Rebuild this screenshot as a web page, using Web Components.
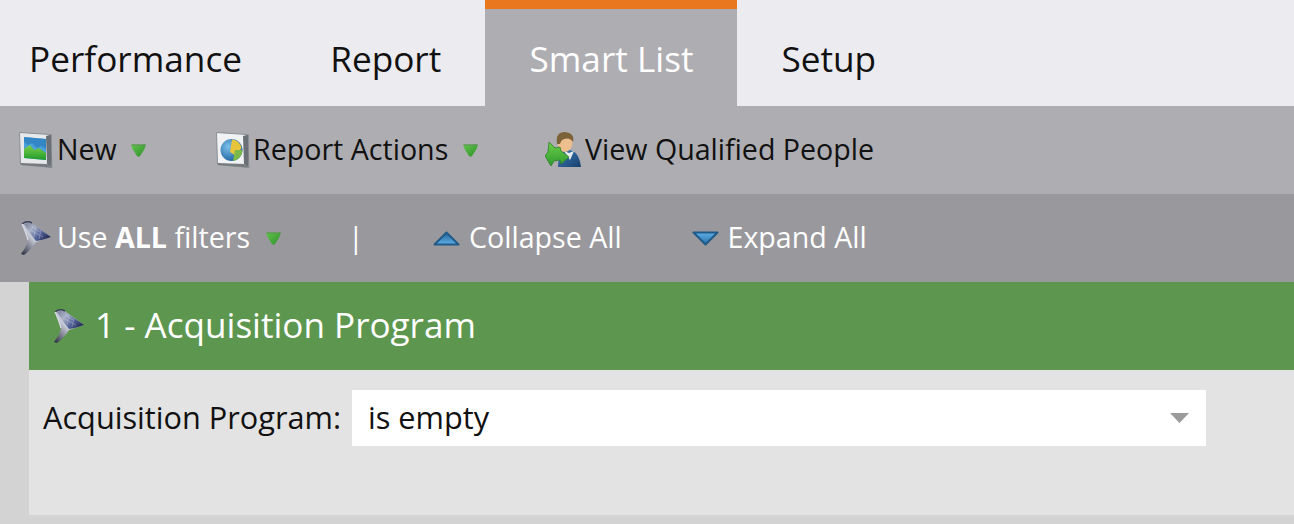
<!DOCTYPE html>
<html><head><meta charset="utf-8">
<style>
html,body{margin:0;padding:0;background:#d3d3d3;overflow:hidden}
body{width:1294px;height:524px;font-family:"Open Sans",sans-serif}
</style></head>
<body>
<svg width="0" height="0" style="position:absolute">
<defs>
<linearGradient id="fn" x1="0" y1="0" x2="1" y2=".6"><stop offset="0" stop-color="#767e96"/><stop offset=".35" stop-color="#aab1c6"/><stop offset=".7" stop-color="#56669c"/><stop offset="1" stop-color="#27305a"/></linearGradient>
<linearGradient id="fs" x1="0" y1="1" x2="1" y2="0"><stop offset="0" stop-color="#23283a"/><stop offset=".45" stop-color="#c8ccd8"/><stop offset="1" stop-color="#5f6b8c"/></linearGradient>
<linearGradient id="gr" x1="0" y1="0" x2="1" y2="1"><stop offset="0" stop-color="#62c44c"/><stop offset="1" stop-color="#2f8f2c"/></linearGradient>
<linearGradient id="bl" x1="0" y1="0" x2="0" y2="1"><stop offset="0" stop-color="#245f96"/><stop offset="1" stop-color="#5eb0e8"/></linearGradient>
<linearGradient id="blu" x1="0" y1="0" x2="0" y2="1"><stop offset="0" stop-color="#5eb0e8"/><stop offset="1" stop-color="#2a6ca6"/></linearGradient>
<linearGradient id="pg" x1="0" y1="0" x2="0" y2="1"><stop offset="0" stop-color="#7ed04a"/><stop offset="1" stop-color="#1f9a2e"/></linearGradient>
<radialGradient id="gl" cx=".35" cy=".35" r=".75"><stop offset="0" stop-color="#7cc0ea"/><stop offset="1" stop-color="#1a5c98"/></radialGradient>
<linearGradient id="ar" x1="0" y1="0" x2="0" y2="1"><stop offset="0" stop-color="#6fcf46"/><stop offset="1" stop-color="#2c9a32"/></linearGradient>
<linearGradient id="su" x1="0" y1="0" x2="1" y2="1"><stop offset="0" stop-color="#3f7cb8"/><stop offset="1" stop-color="#163f6c"/></linearGradient>
<symbol id="funnel" viewBox="0 0 34 36">
<path d="M3 4Q8 0 13 3L32 17Q24 20 17 22Q12 30 5 35L2 34Q8 26 9 20Q6 10 3 4Z" fill="url(#fs)"/>
<path d="M5 4Q9 2 13 4L32 17Q24 20 17 21Q11 14 5 4Z" fill="url(#fn)"/>
<path d="M3 4Q8 0 13 3" fill="none" stroke="#3b4154" stroke-width="1.6"/>
<path d="M3 4Q6 10 9 20" fill="none" stroke="#d9dde6" stroke-width="1.2"/>
<path d="M13 7 21 12M11 10 24 17M17 6 15 17M22 10 20 19" stroke="#e3e7f2" stroke-width=".7" opacity=".4" fill="none"/>
</symbol>
<symbol id="tri" viewBox="0 0 15 13">
<path d="M0 .5H15L13.5 5 9 12Q7.5 13.5 6 12L1.5 5Z" fill="url(#gr)"/>
<path d="M.5 1H14.5" stroke="#5d8f54" stroke-width="1"/>
</symbol>
</defs>
</svg>

<template id="t-tabs"><style>
:host{display:flex;height:106px;background:#ecebf0;padding-left:29px;box-sizing:border-box}
</style><slot></slot></template>

<template id="t-tab"><style>
:host{display:flex;height:106px;box-sizing:border-box;padding:11px 44.1px 0;align-items:center;font-size:35.2px;color:#111;line-height:1}
:host([first]){padding-left:0}
:host([active]){background:#aeadb2;color:#fff;border-top:9px solid #e8771d;padding-top:2px;padding-right:43.4px;margin-right:.4px}
</style><slot></slot></template>

<template id="t-bar"><style>
:host{display:flex;align-items:center;height:88px;box-sizing:border-box;padding-left:19px;background:#aeadb2;color:#111;font-size:28.6px}
:host([dark]){background:#99989d;color:#fff}
</style><slot></slot></template>

<template id="t-act"><style>
:host{display:flex;align-items:center;white-space:nowrap;line-height:1}
::slotted(svg){flex:none;filter:blur(.35px)}
::slotted(span){padding-bottom:2px}
</style><slot></slot></template>

<template id="t-card"><style>
:host{display:block;margin-left:29px;background:#e3e3e3;height:233px}
.h{display:flex;align-items:center;height:88px;background:#5d964f;color:#fff;font-size:35.1px;padding-left:23px;box-sizing:border-box;gap:9px}
.h ::slotted(span){padding-bottom:3px;line-height:1}
.h ::slotted(svg){filter:blur(.35px)}
.b{display:flex;align-items:center;padding:20px 0 0 14px;height:56px;box-sizing:content-box;font-size:30.7px;color:#111}
</style><div class="h"><slot name="icon"></slot><slot name="title"></slot></div><div class="b"><slot></slot></div></template>

<template id="t-sel"><style>
:host{display:flex;align-items:center;justify-content:space-between;height:56px;width:854px;box-sizing:border-box;background:#fff;padding:0 17px 0 16px;color:#111;font-size:30.7px;line-height:1}
svg{flex:none;filter:blur(.4px)}
span{padding-bottom:2px}
</style><span><slot></slot></span><svg width="19" height="10" viewBox="0 0 19 10"><path d="M0 0H19L9.5 10Z" fill="#9b9b9b"/></svg></template>

<x-tabs>
<x-tab first>Performance</x-tab><x-tab>Report</x-tab><x-tab active>Smart List</x-tab><x-tab>Setup</x-tab>
</x-tabs>

<x-bar>
<x-act style="width:197px">
<svg width="34" height="36" viewBox="0 0 34 36" style="margin-right:4px"><path d="M.5.5 31 2.5 33 35.5 1.5 32.5Z" fill="#e6e8ea" stroke="#8a8e93" stroke-width="1"/><path d="M27 4 32.5 2.5V35.5L28 32Z" fill="#6b7076"/><path d="M2 31 28 32 33 35.5 2 33Z" fill="#777b80"/><path d="M5 5 27 7V28L5 26Z" fill="#4aa0d8"/><path d="M5 5 27 7V17L22 14 18 16 13 11 9 13 5 10Z" fill="#2f7fc0" opacity=".8"/><path d="M5 17 11 13 15 18 20 16 27 21V28L5 26Z" fill="url(#pg)"/></svg>
<span>New</span>
<svg width="15" height="13" style="margin-left:14px"><use href="#tri"/></svg>
</x-act>
<x-act style="width:329px">
<svg width="34" height="36" viewBox="0 0 34 36" style="margin-right:3px"><path d="M.5.5 31 2.5 33 35.5 1.5 32.5Z" fill="#f1f2f4" stroke="#8a8e93" stroke-width="1"/><path d="M27 4 32.5 2.5V35.5L28 32Z" fill="#6b7076"/><path d="M2 31 28 32 33 35.5 2 33Z" fill="#777b80"/><circle cx="15.5" cy="18" r="11" fill="url(#gl)"/><path d="M16 7.5A11 11 0 0 1 25.5 16L20 24 14 20Z" fill="#e6c53c"/><path d="M19 18H26.5A11 11 0 0 1 17 29Z" fill="#7cb94a"/></svg>
<span>Report Actions</span>
<svg width="15" height="13" style="margin-left:15px"><use href="#tri"/></svg>
</x-act>
<x-act>
<svg width="36" height="36" viewBox="0 0 36 36" style="margin-right:4px"><path d="M13 35Q13 19 24 18 34 19 36 35Z" fill="url(#su)"/><path d="M19 19 25 28 29 19 24 21Z" fill="#e8ecef"/><ellipse cx="20" cy="11" rx="7.5" ry="9" fill="#eebf8e"/><path d="M12 12Q10 0 20 0 30 1 28 10 25 5 19 7 16 8 15 12Z" fill="#7c6237"/><path d="M4 10 10 16 15 15 16 19 24 25 16 32 15 28 9 29 6 34 0 24 3 20Z" fill="url(#ar)" stroke="#2e7f2a" stroke-width=".8"/></svg>
<span>View Qualified People</span>
</x-act>
</x-bar>

<x-bar dark>
<x-act style="width:329px">
<svg width="34" height="36" style="margin-right:4px"><use href="#funnel"/></svg>
<span>Use <b>ALL</b> filters</span>
<svg width="15" height="13" style="margin-left:16px"><use href="#tri"/></svg>
</x-act>
<x-act style="width:85px"><span>|</span></x-act>
<x-act style="width:259px">
<svg width="27" height="15" viewBox="0 0 27 15" style="margin-right:9px"><path d="M13.5 1.5 25.5 13.5H1.5Z" fill="url(#bl)" stroke="#1f5a88" stroke-width="2" stroke-linejoin="round"/></svg>
<span>Collapse All</span>
</x-act>
<x-act>
<svg width="27" height="15" viewBox="0 0 27 15" style="margin-right:8.5px"><path d="M1.5 1.5H25.5L13.5 13.5Z" fill="url(#blu)" stroke="#1f5a88" stroke-width="2" stroke-linejoin="round"/></svg>
<span>Expand All</span>
</x-act>
</x-bar>

<x-card>
<svg slot="icon" width="34" height="36"><use href="#funnel"/></svg>
<span slot="title">1 - Acquisition Program</span>
<span style="margin-right:11px;white-space:nowrap;line-height:1;padding-bottom:2px">Acquisition Program:</span>
<x-sel>is empty</x-sel>
</x-card>

<script>
function def(name,tid){
  customElements.define(name,class extends HTMLElement{
    constructor(){super();this.attachShadow({mode:'open'}).appendChild(document.getElementById(tid).content.cloneNode(true));}
  });
}
def('x-tabs','t-tabs');def('x-tab','t-tab');def('x-bar','t-bar');def('x-act','t-act');def('x-card','t-card');def('x-sel','t-sel');
</script>
</body></html>
